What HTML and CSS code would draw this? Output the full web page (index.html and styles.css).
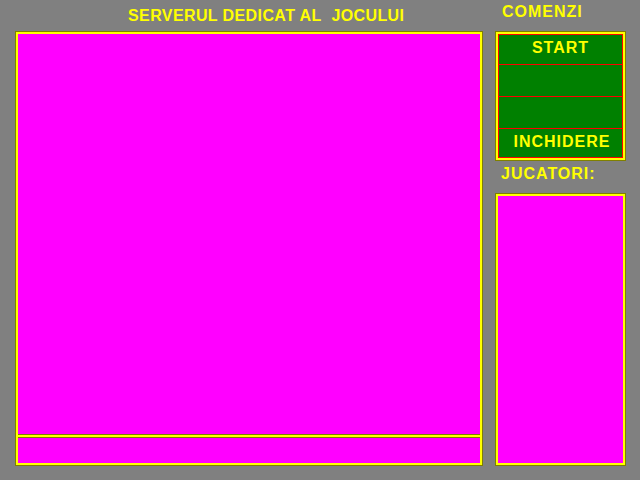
FILE: index.html
```html
<!DOCTYPE html>
<html>
<head>
<meta charset="utf-8">
<link rel="stylesheet" href="styles.css">
</head>
<body>
<div class="page">
  <div class="left">
    <div class="title">SERVERUL DEDICAT AL&nbsp; JOCULUI</div>
    <div class="frame main-frame">
      <div class="pane pane-top"></div>
      <div class="divider"></div>
      <div class="pane pane-bottom"></div>
    </div>
  </div>
  <div class="right">
    <div class="heading heading-cmd">COMENZI</div>
    <div class="frame cmd-frame">
      <div class="cmd-list">
        <div class="cmd cmd-1">START</div>
        <div class="cmd cmd-2"></div>
        <div class="cmd cmd-3"></div>
        <div class="cmd cmd-4">INCHIDERE</div>
      </div>
    </div>
    <div class="heading heading-players">JUCATORI:</div>
    <div class="frame players-frame">
      <div class="pane players"></div>
    </div>
  </div>
</div>
</body>
</html>
```

FILE: styles.css
```css
html, body {
  margin: 0;
  padding: 0;
  background: #808080;
}
body {
  width: 640px;
  height: 480px;
  overflow: hidden;
  font-family: "Liberation Sans", Arial, sans-serif;
  font-weight: bold;
  color: #ffff00;
}
.page {
  display: flex;
  padding-left: 15px;
  gap: 12px;
}
.left {
  width: 468px;
  display: flex;
  flex-direction: column;
}
.title {
  height: 31px;
  box-sizing: border-box;
  padding-left: 113px;
  padding-top: 6px;
  font-size: 16px;
  line-height: 19px;
  letter-spacing: 0.4px;
  white-space: nowrap;
}
.frame {
  box-sizing: border-box;
  border: 1px solid #808000;
  background: #ffff00;
  padding: 2px;
  display: flex;
  flex-direction: column;
}
.pane {
  background: #ff00ff;
}
.main-frame {
  height: 435px;
}
.pane-top {
  height: 400px;
  flex: none;
}
.divider {
  flex: none;
  height: 2px;
  background: #ffff00;
  border-top: 1px solid #808000;
  border-bottom: 1px solid #808000;
}
.pane-bottom {
  flex: 1;
}
.right {
  width: 131px;
  display: flex;
  flex-direction: column;
}
.heading {
  box-sizing: border-box;
  font-size: 16px;
  line-height: 19px;
  letter-spacing: 1px;
  white-space: nowrap;
}
.heading-cmd {
  height: 31px;
  padding-left: 7px;
  padding-top: 2px;
}
.heading-players {
  height: 32px;
  padding-left: 6px;
  padding-top: 3px;
}
.cmd-frame {
  height: 130px;
}
.cmd-list {
  flex: 1;
  display: flex;
  flex-direction: column;
  border: 1px solid #ff0000;
  background: #008000;
}
.cmd {
  flex: none;
  display: flex;
  align-items: center;
  justify-content: center;
  font-size: 16px;
  line-height: 19px;
  letter-spacing: 1px;
  padding-bottom: 4px;
  box-sizing: border-box;
  overflow: hidden;
}
.cmd + .cmd {
  border-top: 1px solid #ff0000;
}
.cmd-1 { height: 29px; }
.cmd-2 { height: 32px; }
.cmd-3 { height: 32px; }
.cmd-4 { height: 29px; padding-left: 3px; }
.players-frame {
  height: 273px;
}
.players {
  flex: 1;
}
```
